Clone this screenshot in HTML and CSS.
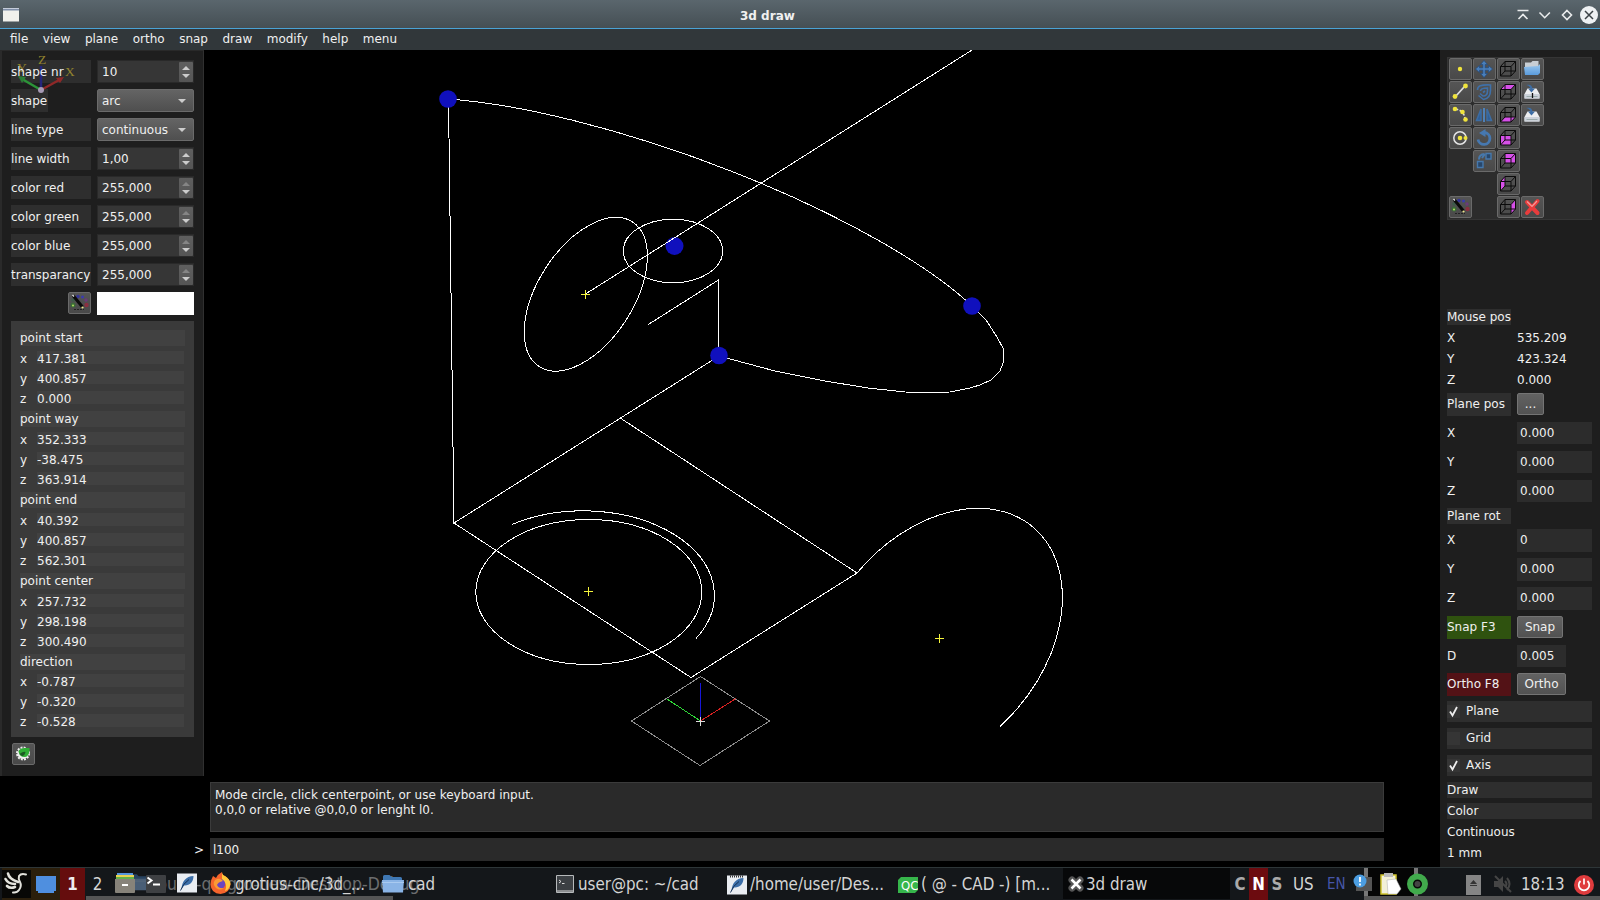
FILE: index.html
```html
<!DOCTYPE html>
<html lang="en">
<head>
<meta charset="utf-8">
<title>3d draw</title>
<link rel="stylesheet" href="styles.css">
</head>
<body>
<svg class="defs" aria-hidden="true">
  <defs>
    <linearGradient id="blueg" x1="0" y1="0" x2="0" y2="1"><stop offset="0" stop-color="#9cc8ee"/><stop offset="1" stop-color="#5a9bdc"/></linearGradient>
    <symbol id="cube" viewBox="0 0 22 22"><path d="M3.500 8.500h10.500v9.500h-10.500zM8 3.500h10.500v9.500h-10.500zM3.500 8.500l4.500-5M14 8.500l4.500-5M3.500 18l4.500-5M14 18l4.500-5" fill="none" stroke="#0b0b0b" stroke-width="1"/></symbol>
    <symbol id="wand" viewBox="0 0 22 22"><circle cx="5" cy="13" r="2.500" fill="#3b6b38"/><circle cx="5" cy="8" r="1.800" fill="#3c5a4a"/><circle cx="10" cy="4.500" r="1.700" fill="#34349a"/><circle cx="14.500" cy="5" r="1.500" fill="#3a3ab0"/><circle cx="18" cy="8" r="1.700" fill="#6a3a7a"/><circle cx="18.500" cy="13" r="2.200" fill="#8a3040"/><path d="M6 17.500h10" stroke="#222" stroke-width="1" stroke-dasharray="2 1"/><circle cx="5" cy="13.500" r="1" fill="#b4e060"/><path d="M5 3.500L14.500 15" stroke="#0a0a0a" stroke-width="3"/><path d="M4.500 3l1.500 1.500" stroke="#ddd" stroke-width="1.500"/><circle cx="14.500" cy="15.500" r="1.100" fill="#f0e890"/></symbol>
    <symbol id="disk" viewBox="0 0 22 22"><path d="M6.500 7.500h9l3 5.500v4.500h-15V13z" fill="#eceef0"/><path d="M3.500 13h15v4.500h-15z" fill="#ccd2da"/><path d="M5.500 15.500h11" stroke="#9aa" stroke-width="1"/><path d="M5 4c4-1 6 0 6.500 3.500h2.500l-3.500 4-3.500-4h2.300c0-1.500-1-3-4.300-3.500z" fill="#3c6da5"/></symbol>
    <symbol id="folder" viewBox="0 0 22 20"><path d="M1 2.500q0-1.500 1.500-1.500h5l2 2h9q1.500 0 1.500 1.500v11h-19z" fill="#3f78b4"/><path d="M0 6h22l-1 12.500h-20z" fill="#8ab4e6"/><path d="M0 8.500h22" stroke="#a9caf0"/></symbol>
    <symbol id="quill" viewBox="0 0 20 20"><path d="M0 .5h20v19h-20z" fill="#e9edf2"/><path d="M4.500 16C5 8 9 3.500 16.500 3 16.500 9 12.500 13 7 12.500z" fill="#3c6fa9"/><path d="M3.500 17.500q2.500-7 8.500-11" stroke="#122f54" fill="none"/></symbol>
  </defs>
</svg>

<header class="titlebar">
  <svg class="app-icon" viewBox="0 0 16 14"><path d="M0 0h16v13.500h-16z" fill="#f1f1ec"/><path d="M0 0h16v2.500h-16z" fill="#7f8ea8"/><path d="M0 .5h16" stroke="#c5cddb"/></svg>
  <span class="title">3d draw</span>
  <svg class="win-buttons" viewBox="0 0 84 20" fill="none" stroke="#e9ebec" stroke-width="1.600"><path d="M1.500 5.500h11M2.500 14l4.500-4.500L11.500 14M23.500 7.500l5.200 5.200 5.200-5.200M51 5.500l4.500 4.500-4.500 4.500-4.500-4.500z"/><circle cx="73" cy="10" r="9" fill="#eef1f3" stroke="none"/><path d="M69 6l8 8M77 6l-8 8" stroke="#3b4246" stroke-width="1.500"/></svg>
</header>
<nav class="menubar"><span>file</span><span>view</span><span>plane</span><span>ortho</span><span>snap</span><span>draw</span><span>modify</span><span>help</span><span>menu</span></nav>

<main class="workspace">
  <svg class="scene" viewBox="0 50 1600 817">
    <g fill="#1010bd"><circle cx="674.500" cy="246" r="9"/></g>
    <g class="wire" stroke="#fff">
      <path d="M448.500 99L454 523L719 356L718.500 280L648.300 324.500"/>
      <path d="M454 523L691 677.500L857 573L621 418.500"/>
      <path d="M585.500 294L972 50"/>
      <path d="M448 99A350 89.600 20.230 0 1 972 306L986 320L997 337L1003.500 349L1003.500 362L1000 371L991 380L980 385L968 388.500L950 392L925 392.500L905 392L868 388L825 381L775 371L719 356"/>
      <ellipse cx="673" cy="251" rx="49.700" ry="31.800"/>
      <ellipse cx="585.800" cy="294.200" rx="86" ry="47.900" transform="rotate(-57.300 585.800 294.200)"/>
      <ellipse cx="588.800" cy="592" rx="113" ry="72.500"/>
      <path d="M512 524.500A131 84.500 0 0 1 696 638.500"/>
      <path d="M857 573A147.300 105 -49.800 1 1 1000 726.500"/>
    </g>
    <g fill="#1010bd"><circle cx="448" cy="99" r="8.800"/><circle cx="972" cy="306" r="8.800"/><circle cx="719" cy="355.500" r="8.800"/></g>
    <g class="wire">
      <path d="M631.500 721L700.500 676.500L769.500 721L700 765.500z" stroke="#8e8e8e"/>
      <path d="M700.500 721V683" stroke="#1616d8"/><path d="M700.500 721L736 698.500" stroke="#d82020"/><path d="M700.500 721L667 699" stroke="#30d838"/>
      <path d="M696 721.500h9M700.500 717v9" stroke="#ddd"/>
      <path d="M581 294.500h9M585.500 290v9M584 591.500h9M588.500 587v9M935 638.500h9M939.500 634v9" stroke="#f4f43c"/>
    </g>
  </svg>

  <aside class="left">
    <div class="props">
      <div class="row"><label>shape nr</label><div class="spin">10<i></i></div></div>
      <div class="row"><label class="short">shape</label><div class="combo">arc</div></div>
      <div class="row"><label>line type</label><div class="combo">continuous</div></div>
      <div class="row"><label>line width</label><div class="spin">1,00<i></i></div></div>
      <div class="row"><label>color red</label><div class="spin max">255,000<i></i></div></div>
      <div class="row"><label>color green</label><div class="spin max">255,000<i></i></div></div>
      <div class="row"><label>color blue</label><div class="spin max">255,000<i></i></div></div>
      <div class="row"><label>transparancy</label><div class="spin max">255,000<i></i></div></div>
      <div class="row pick"><button class="tool"><svg><use href="#wand"/></svg></button><div class="swatch"></div></div>
    </div>
    <svg class="gizmo" viewBox="0 0 80 45"><path d="M41 38V14" stroke="#25257c" stroke-width="2.500"/><path d="M41 38L22 27" stroke="#2c9438" stroke-width="2.500"/><path d="M41 38L61 27" stroke="#8f2828" stroke-width="2.500"/><path d="M18 24l8 1-4 6z" fill="#2a7d36"/><path d="M64 25l-8 1 4 5z" fill="#8f2828"/><circle cx="41" cy="38" r="3" fill="#a79ab5"/><text x="38" y="12">Z</text><text x="17" y="20">Y</text><text x="65" y="24">X</text></svg>
    <div class="points">
      <h4>point start</h4><p><b>x</b><span>417.381</span></p><p><b>y</b><span>400.857</span></p><p><b>z</b><span>0.000</span></p>
      <h4>point way</h4><p><b>x</b><span>352.333</span></p><p><b>y</b><span>-38.475</span></p><p><b>z</b><span>363.914</span></p>
      <h4>point end</h4><p><b>x</b><span>40.392</span></p><p><b>y</b><span>400.857</span></p><p><b>z</b><span>562.301</span></p>
      <h4>point center</h4><p><b>x</b><span>257.732</span></p><p><b>y</b><span>298.198</span></p><p><b>z</b><span>300.490</span></p>
      <h4 class="tight">direction</h4><p><b>x</b><span>-0.787</span></p><p><b>y</b><span>-0.320</span></p><p><b>z</b><span>-0.528</span></p>
    </div>
    <button class="tool gear"><svg viewBox="0 0 22 22"><circle cx="11" cy="10.500" r="5.500" fill="#eee"/><circle cx="11" cy="10.500" r="6" fill="none" stroke="#eee" stroke-width="2" stroke-dasharray="1.900 1.240"/><path d="M6.500 8.500q1-3.500 6-3.500h5v3q-1 6-5 6-5 0-6-5.500z" fill="#2fae35"/><path d="M7.500 11q4-3 6-2-1 4-3.500 4z" fill="#1c5a24"/></svg></button>
  </aside>

  <section class="console">
    <div class="message">Mode circle, click centerpoint, or use keyboard input.<br>0,0,0 or relative @0,0,0 or lenght l0.</div>
    <div class="prompt"><span>&gt;</span><div class="entry">l100</div></div>
  </section>

  <aside class="right">
    <div class="toolbox">
      <button class="tool"><svg viewBox="0 0 22 22"><circle cx="11" cy="11" r="2.200" fill="#f0e43c"/></svg></button>
      <button class="tool"><svg viewBox="0 0 22 22"><path d="M11 2.500l3.500 4h-2.300v3.300h3.300V7.500l4 3.500-4 3.500v-2.300h-3.300v3.300h2.300L11 19.500l-3.500-4h2.300v-3.300H6.500v2.300L2.500 11l4-3.500v2.300h3.300V6.500H7.500z" fill="#4a7fba" stroke="#234a7d" stroke-width=".7"/></svg></button>
      <button class="tool"><svg><use href="#cube"/></svg></button>
      <button class="tool"><svg viewBox="0 0 22 22"><path d="M4 4.500h6l1.500-1.500h6v7h-13.500z" fill="#c8ced4"/><path d="M3 9l14-1 2-2v9l-2 2h-13z" fill="url(#blueg)"/></svg></button>

      <button class="tool"><svg viewBox="0 0 22 22"><path d="M6 16L16 5" stroke="#ddd" stroke-width="1.800"/><g fill="#f0e43c"><circle cx="6" cy="15.500" r="2.400"/><circle cx="16.500" cy="5" r="2.400"/></g></svg></button>
      <button class="tool"><svg viewBox="0 0 22 22" fill="none" stroke="#3f70a8" stroke-width="1.600"><path d="M4.500 9c0-4 3-5.500 13-5v5c0 6-3 9-7 9.500l-5-4M7.500 10c0-2.500 2-3 7-3v3c0 3-1.500 5-4.500 5l-3-2.500M10 11.500l2-1.500"/></svg></button>
      <button class="tool"><svg viewBox="0 0 22 22"><path d="M3.500 8.500l4.500-5h10.500l-4.500 5z" fill="#d650e8"/><use href="#cube"/></svg></button>
      <button class="tool"><svg viewBox="0 0 22 22"><use href="#disk"/><path d="M11.500 12v5" stroke="#111" stroke-width="1.300"/></svg></button>

      <button class="tool"><svg viewBox="0 0 22 22"><path d="M6 5q9 1 10 10" fill="none" stroke="#ddd" stroke-width="1.600" stroke-dasharray="3 1.500"/><g fill="#f0e43c"><circle cx="6" cy="5" r="2.300"/><circle cx="13.500" cy="8" r="2.300"/><circle cx="16.500" cy="15.500" r="2.300"/></g></svg></button>
      <button class="tool"><svg viewBox="0 0 22 22"><path d="M8 5v11.500h-4.500zM14 5v11.500h4.500z" fill="#2f5f96" stroke="#3c6ca2" stroke-width="1.500"/><path d="M11 4v14" stroke="#4f80b6" stroke-width="2"/></svg></button>
      <button class="tool"><svg viewBox="0 0 22 22"><path d="M3.500 18l4.500-5h10.500l-4.500 5z" fill="#d650e8"/><use href="#cube"/></svg></button>
      <button class="tool"><svg><use href="#disk"/></svg></button>

      <button class="tool"><svg viewBox="0 0 22 22"><circle cx="11" cy="11" r="6.200" fill="none" stroke="#e4e4e4" stroke-width="1.500"/><g fill="#f0e43c"><circle cx="11" cy="11" r="2.300"/><circle cx="16.500" cy="11" r="2"/></g></svg></button>
      <button class="tool"><svg viewBox="0 0 22 22"><path d="M11.500 5.500a6 6 0 1 1-6.500 7" fill="none" stroke="#4678b0" stroke-width="2.800"/><path d="M6 6l6.500-4v8z" fill="#4678b0"/></svg></button>
      <button class="tool"><svg viewBox="0 0 22 22"><path d="M3.500 8.500h10.500v9.500h-10.500z" fill="#d650e8"/><use href="#cube"/></svg></button>
      <span></span>

      <span></span>
      <button class="tool"><svg viewBox="0 0 22 22" fill="#28476b" stroke="#4678ac" stroke-width="1.400"><path d="M4.500 11.500h5.500v6h-5.500zM13 3.500h5v5.500h-5z"/><path d="M6 9.500q0-5 5.500-5.500M9 8l3-4" fill="none" stroke-width="2"/></svg></button>
      <button class="tool"><svg viewBox="0 0 22 22"><path d="M8 3.500h10.500v9.500h-10.500z" fill="#d650e8"/><use href="#cube"/></svg></button>
      <span></span>

      <span></span><span></span>
      <button class="tool"><svg viewBox="0 0 22 22"><path d="M3.500 8.500l4.500-5v9.500l-4.500 5z" fill="#d650e8"/><use href="#cube"/></svg></button>
      <span></span>

      <button class="tool"><svg><use href="#wand"/></svg></button>
      <span></span>
      <button class="tool"><svg viewBox="0 0 22 22"><path d="M14 8.500l4.500-5v9.500l-4.500 5z" fill="#d650e8"/><use href="#cube"/></svg></button>
      <button class="tool"><svg viewBox="0 0 22 22"><path d="M6 6l10.500 11M16.500 5L6 17" stroke="#e83c3c" stroke-width="4" stroke-linecap="round"/><path d="M6 5.500l5 5 5-5.500" stroke="#f59a9a" stroke-width="1.200" fill="none"/></svg></button>
    </div>

    <div class="status">
      <div class="line s"><em>Mouse pos</em></div>
      <div class="line s"><span>X</span><span>535.209</span></div>
      <div class="line s"><span>Y</span><span>423.324</span></div>
      <div class="line s"><span>Z</span><span>0.000</span></div>
      <div class="line low"><em>Plane pos</em><button class="push dots">...</button></div>
      <div class="line"><span>X</span><div class="field">0.000</div></div>
      <div class="line"><span>Y</span><div class="field">0.000</div></div>
      <div class="line m"><span>Z</span><div class="field">0.000</div></div>
      <div class="line s"><em>Plane rot</em></div>
      <div class="line low"><span>X</span><div class="field">0</div></div>
      <div class="line low"><span>Y</span><div class="field">0.000</div></div>
      <div class="line low"><span>Z</span><div class="field">0.000</div></div>
      <div class="line low"><em class="on">Snap F3</em><button class="push snap">Snap</button></div>
      <div class="line m"><span>D</span><div class="field small">0.005</div></div>
      <div class="line m low"><em class="off">Ortho F8</em><button class="push ortho">Ortho</button></div>
      <div class="check"><i><svg viewBox="0 0 13 13"><path d="M3 6.500l2.500 4L10 2" /></svg></i>Plane</div>
      <div class="check"><i></i>Grid</div>
      <div class="check"><i><svg viewBox="0 0 13 13"><path d="M3 6.500l2.500 4L10 2" /></svg></i>Axis</div>
      <div class="line s wide"><em>Draw</em></div>
      <div class="line s wide"><em>Color</em></div>
      <div class="line s wide"><span>Continuous</span></div>
      <div class="line s wide"><span>1 mm</span></div>
    </div>
  </aside>
</main>

<footer class="taskbar">
  <div class="ghost"><svg><use href="#folder"/></svg><span>build-qrogro-new-Desktop-Debug</span></div>
  <div class="launch bird"><svg viewBox="0 0 29 28" fill="none" stroke="#e2e2dc" stroke-linecap="round"><path d="M24 4.500q-5-1.500-7 1.500-1 3 1 6 2 4-1 8-2 3-6 2.500" stroke-width="2"/><path d="M16 12Q7 9 6 3.500M13 14Q6 14 3.500 9M13 17q-5 2-8-1" stroke-width="2.600"/></svg></div>
  <div class="launch desk"><svg viewBox="0 0 20 20"><path d="M0 2h20v15h-2v2h-16v-2h-2z" fill="#4f8fdf"/></svg></div>
  <div class="ws active">1</div><div class="ws">2</div>
  <svg class="ic files" viewBox="0 0 20 20"><path d="M2 0h16v2h-16z" fill="#5596dd"/><path d="M1 2h18v2h-18z" fill="#e8d250"/><path d="M1 4h18v2h-18z" fill="#62b14a"/><path d="M0 6h20v13q0 1-1 1h-18q-1 0-1-1z" fill="#87837a"/><path d="M7 11h6v2h-6z" fill="#fff"/></svg>
  <svg class="ic term" viewBox="0 0 20 20"><rect y="1" width="20" height="18" rx="1" fill="#3e4043"/><path d="M1.500 3.500l4 3-4 3M7 10.500h7" fill="none" stroke="#fff" stroke-width="2"/></svg>
  <svg class="ic pen"><use href="#quill"/></svg>
  <svg class="ic fox" viewBox="0 0 21 22"><path d="M3 4l3 2q2-4 6-6 0 3 3 4 5 3 5.500 8.500Q20 21 10.500 22 1 21.500.5 12.500.500 8 3 4z" fill="#f5642c"/><path d="M12 0q0 3 3 4 5 3 5.500 8-1.500 6-5.500 7 3-7-3-12z" fill="#ffc83a"/><circle cx="10.500" cy="12" r="4.700" fill="#6a45c0"/><path d="M5 8q5-3 8 1-5 1-6 4 2 4 7 3-4 3-8 0-4-4-1-8z" fill="#fa9a35"/></svg>
  <span class="t t-fox">grotius-cnc/3d_...</span>
  <svg class="ic fold"><use href="#folder"/></svg>
  <span class="t t-cad">cad</span>
  <svg class="ic xt" viewBox="0 0 18 18"><path d="M.5.5h17v17h-17z" fill="#3c4044" stroke="#b6b9bb"/><path d="M3 5l2 1.500-2 1.500M6 8.500h2.500" stroke="#ddd" fill="none"/><path d="M1 16h16" stroke="#ddd"/></svg>
  <span class="t t-user">user@pc: ~/cad</span>
  <svg class="ic note" viewBox="0 0 20 20"><use href="#quill"/><path d="M3 1.500h14" stroke="#333" stroke-width="2" stroke-dasharray="1 1"/></svg>
  <span class="t t-home">/home/user/Des...</span>
  <svg class="ic qc" viewBox="0 0 20 16"><path d="M3 0h17v13l-3 3h-17v-13z" fill="#36b64b"/><text x="3" y="12.500">QC</text></svg>
  <span class="t t-qc">( @ - CAD -) [m...</span>
  <div class="current"><svg viewBox="0 0 16 16"><path d="M4 4l8 8M12 4l-8 8" stroke="#555" stroke-width="7" stroke-linecap="round"/><path d="M3.500 3.500l9 9M12.500 3.500l-9 9" stroke="#fff" stroke-width="2.500"/></svg><span>3d draw</span></div>
  <div class="keys"><b>C</b><b class="n">N</b><b>S</b></div>
  <span class="t us">US</span><span class="t en">EN</span>
  <svg class="tray" viewBox="0 0 80 32"><path d="M14 0h4v32h-4zM64 0h4v32h-4z" fill="#777"/><path d="M18 0h46v28h-46z" fill="#050505"/><path d="M6 9h16v14h-16z" fill="#555"/><circle cx="10" cy="13" r="6.500" fill="#4c9ee2"/><path d="M10 9v5M10 15.500v2" stroke="#fff" stroke-width="1.800"/><path d="M31 7h15v19h-15z" fill="#f2f0d8" stroke="#cfc32c" stroke-width="1.500"/><path d="M34 5h9v4h-9z" fill="#bbb"/><path d="M37 12l9-1 5 10-4 5h-9z" fill="#fff" stroke="#aaa" stroke-width=".5"/><circle cx="67.500" cy="16" r="7.500" fill="#080a08" stroke="#41aa4c" stroke-width="6"/><circle cx="67.500" cy="16" r="3" fill="#444"/></svg>
  <svg class="ic eject" viewBox="0 0 15 20"><path d="M0 0h15v20h-15z" fill="#858585"/><path d="M4 9l3.500-4 3.500 4zM4 10h7v1h-7z" fill="#333"/></svg>
  <svg class="ic mute" viewBox="0 0 18 18"><path d="M0 6h4l5-5v16l-5-5h-4z" fill="#454545"/><path d="M1 1l16 16M11 6q3 3 0 6M13 3q5 6 0 12" stroke="#454545" stroke-width="2" fill="none"/></svg>
  <span class="t clock">18:13</span>
  <svg class="ic power" viewBox="0 0 20 20"><circle cx="10" cy="10" r="10" fill="#df3b3d"/><path d="M6.500 6a5.300 5.300 0 1 0 7 0M10 3.500v6" fill="none" stroke="#fff" stroke-width="1.700"/></svg>
  <div class="strip strip-a"></div><div class="strip strip-b"></div>
</footer>
</body>
</html>
```
FILE: styles.css
```css
* { box-sizing: border-box; }
body { margin: 0; width: 1600px; height: 900px; overflow: hidden; background: #000; color: #f0f0f0; display: flex; flex-direction: column; font: 12px/15px "DejaVu Sans", sans-serif; }
.defs { position: absolute; width: 0; height: 0; }
svg { display: block; }
button { font: inherit; color: inherit; padding: 0; }

.titlebar { position: relative; height: 29px; flex: none; display: flex; align-items: center; justify-content: space-between; padding: 0 3px; background: linear-gradient(#5a666d, #454f54); border-bottom: 1px solid #4aa3d6; }
.app-icon { width: 16px; height: 14px; margin-top: 2px; }
.title { font-weight: bold; position: absolute; left: 740px; top: 9px; }
.win-buttons { width: 84px; height: 20px; margin: 2px -3px 0 0; }
.menubar { height: 21px; flex: none; display: flex; gap: 14.500px; padding: 1px 10px; background: #31373a; line-height: 19px; }

.workspace { position: relative; height: 817px; flex: none; display: grid; grid-template-columns: 204px 1fr 160px; }
.scene { position: absolute; left: 0; top: 0; width: 1600px; height: 817px; }
.wire { fill: none; stroke-width: 1; shape-rendering: crispEdges; }

.left { position: relative; height: 726px; background: #1e1e1e; border-left: 2px solid #2a2a2a; border-right: 1px solid #303030; padding: 9px 9px 0; border-top: 1px solid #292929; }
.row { display: flex; height: 29px; gap: 6px; padding-bottom: 6px; }
.row label { width: 80px; line-height: 25px; background: #2e2e2e; white-space: nowrap; position: relative; z-index: 2; height: 23px; }
.row:first-child label { background: transparent; }
.row:first-child { background: linear-gradient(#2e2e2e, #2e2e2e) 0 0 / 80px 23px no-repeat; }
.row label.short { width: 37px; margin-right: 43px; background: transparent; }
.row:nth-child(2) { background: linear-gradient(#2e2e2e, #2e2e2e) 0 0 / 37px 23px no-repeat; }
.spin, .combo { position: relative; width: 97px; height: 23px; line-height: 23px; padding-left: 4px; background: #363636; border: 1px solid #292929; }
.spin i { position: absolute; right: 0; top: 1px; width: 14px; height: 20px; background: linear-gradient(#5f5f5f, #555); border-radius: 1px; }
.spin i::before, .spin i::after { content: ""; position: absolute; left: 3px; border: 4px solid transparent; border-top: 0; border-bottom-color: #ccc; top: 4px; }
.spin i::after { border-top: 4px solid #ccc; border-bottom: 0; top: 12px; }
.spin.max i::before { border-bottom-color: #858585; }
.combo { background: linear-gradient(#646464, #4f4f4f); border-color: #6b6b6b; border-radius: 2px; }
.combo::after { content: ""; position: absolute; right: 7px; top: 9px; border: 4px solid transparent; border-top-color: #ccc; border-bottom: 0; }
.pick { justify-content: flex-end; }
.swatch { width: 97px; height: 23px; background: #fff; }
.tool { display: block; width: 23px; height: 22px; border: 1px solid #6a6a6a; border-radius: 2px; background: linear-gradient(#555, #494949); }
.tool svg { width: 22px; height: 22px; margin: -1px; }
.gizmo { position: absolute; left: -2px; top: 1px; width: 80px; height: 45px; z-index: 1; font: 13.500px "Liberation Serif", serif; fill: #92842f; }
.points { width: 183px; height: 416px; background: #3a3a3a; padding: 9px 9px 0; }
.points h4 { margin: 0 0 5px; height: 16px; line-height: 17px; font-weight: normal; background: #414141; }
.points h4.tight { margin-bottom: 4px; }
.points p { margin: 0; height: 20px; display: flex; }
.points b { font-weight: normal; width: 17px; line-height: 16px; }
.points span { width: 147px; height: 13px; line-height: 16px; background: #414141; }
.gear { margin: 6px 0 0 1px; }

.console { position: relative; grid-column: 2; align-self: end; height: 85px; width: 1180px; padding-left: 6px; display: flex; flex-direction: column; gap: 6px; }
.message { height: 50px; background: #2a2a2a; border: 1px solid #3b3b3b; padding: 5px 4px; }
.prompt { display: flex; height: 23px; margin-left: -16px; }
.prompt > span { width: 16px; line-height: 25px; }
.entry { flex: 1; background: #2a2a2a; padding-left: 3px; line-height: 25px; }

.right { grid-column: 3; position: relative; background: #1e1e1e; padding: 7px 8px 0 7px; }
.toolbox { height: 163px; background: #2c2c2c; border: 1px solid #353535; padding: 0 1px; display: grid; grid-template-columns: repeat(4, 24px); grid-auto-rows: 23px; align-content: start; }
.status { margin-top: 89px; }
.line { height: 29px; display: grid; grid-template-columns: 64px 75px; column-gap: 6px; padding-bottom: 7px; line-height: 22px; }
.line.s { height: 21px; padding-bottom: 6px; line-height: 16px; }
.line.m { height: 28px; padding-bottom: 6px; }
.line.low, .line.low .field { line-height: 23px; }
.line.wide { grid-template-columns: 145px; }
.line em { font-style: normal; background: #2e2e2e; white-space: nowrap; }
.line em.on { background: #2f520f; }
.line em.off { background: #531216; }
.field { background: #2c2c2c; padding-left: 3px; }
.field.small { width: 49px; }
.push { justify-self: start; height: 22px; border: 1px solid #747474; border-radius: 2px; background: linear-gradient(#626262, #525252); line-height: 21px; text-align: center; }
.dots { width: 27px; }
.snap { width: 46px; }
.ortho { width: 49px; }
.check { height: 21px; margin-bottom: 6px; background: #2e2e2e; display: flex; align-items: center; gap: 6px; line-height: 17px; }
.check i { width: 13px; height: 13px; background: #353535; }
.check path { fill: none; stroke: #eee; stroke-width: 1.800; }

.taskbar { position: relative; height: 33px; flex: none; background: #14171a; border-top: 1px solid #2e3638; font: 16.800px/32px "DejaVu Sans Condensed", "DejaVu Sans", sans-serif; font-stretch: condensed; color: #d5d5d5; }
.taskbar > * { position: absolute; top: 0; white-space: nowrap; }
.taskbar .launch { width: 29px; height: 32px; background: #2b1f0c; }
.bird { left: 2px; padding-top: 2px; }
.bird svg { width: 29px; height: 28px; background: #080806; }
.taskbar .desk { left: 31px; padding: 6px 5px; }
.desk svg { width: 20px; height: 20px; }
.ws { left: 85px; width: 25px; height: 32px; text-align: center; }
.ws.active { left: 60px; background: #650d0d; font-weight: bold; color: #eee; }
.taskbar .ghost { left: 130px; display: flex; opacity: .45; font-size: 17.500px; }
.ghost svg { width: 20px; height: 19px; margin: 5px 7px 0 0; }
.taskbar .ic { top: 7px; width: 20px; height: 20px; }
.taskbar .files { left: 115px; top: 5px; }
.taskbar .term { left: 146px; top: 6px; }
.taskbar .pen { left: 177px; top: 5px; }
.taskbar .fox { left: 210px; top: 4px; width: 21px; height: 22px; }
.t-fox { left: 235px; }
.taskbar .fold { left: 382px; width: 22px; top: 6px; }
.t-cad { left: 408px; }
.taskbar .xt { left: 556px; width: 18px; height: 18px; }
.t-user { left: 578px; }
.note { left: 727px; }
.t-home { left: 750px; }
.taskbar .qc { left: 898px; top: 9px; height: 16px; font: 13px "DejaVu Sans Condensed", sans-serif; font-stretch: condensed; fill: #fff; }
.t-qc { left: 921px; }
.current { left: 1063px; width: 167px; height: 31px; background: #070809; display: flex; gap: 2px; padding-left: 5px; }
.current svg { width: 16px; height: 16px; margin-top: 8px; }
.keys { left: 1231px; display: flex; color: #aaa; }
.keys b { width: 18px; text-align: center; }
.keys .n { width: 19px; background: #6c0b0f; color: #fff; }
.us { left: 1293px; }
.en { left: 1327px; color: #4656a8; font-size: 15px; }
.tray { left: 1350px; width: 80px; height: 32px; }
.taskbar .eject { left: 1466px; width: 15px; }
.taskbar .mute { left: 1494px; width: 18px; height: 18px; }
.clock { left: 1521px; }
.taskbar .power { left: 1574px; }
.taskbar .strip { top: 28px; height: 4px; background: #555; }
.strip-a { left: 86px; width: 307px; }
.strip-b { left: 1364px; width: 236px; }
```
